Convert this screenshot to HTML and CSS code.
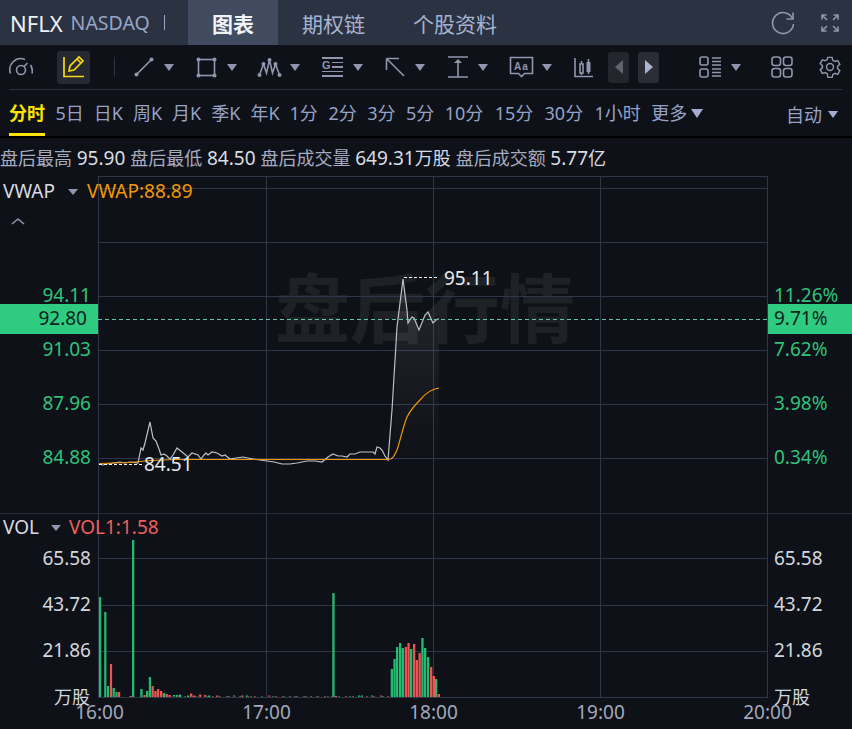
FILE: index.html
```html
<!DOCTYPE html>
<html lang="zh-CN">
<head>
<meta charset="utf-8">
<title>NFLX</title>
<link rel="stylesheet" href="styles.css">
</head>
<body>
<div class="app">
  <header class="topbar">
    <div class="symbol"><span class="ticker">NFLX</span><span class="market">NASDAQ</span><span class="sep"></span></div>
    <nav class="tabs">
      <span class="tab active">图表</span>
      <span class="tab">期权链</span>
      <span class="tab">个股资料</span>
    </nav>
    <div class="top-actions">
      <svg class="ico" width="24" height="24" viewBox="0 0 24 24"><path d="M21.500 7.500A10.500 10.500 0 1 0 22.500 13"/><path d="M22 1.500v6.500h-6.500"/></svg>
      <svg class="ico" width="18" height="18" viewBox="0 0 18 18"><path d="M1 5.500V1h4.500M12.500 1H17v4.500M1 12.500V17h4.500M17 12.500V17h-4.500M1.500 1.500L6 6M16.500 1.500L12 6M1.500 16.500L6 12M16.500 16.500L12 12"/></svg>
    </div>
  </header>

  <div class="toolbar">
    <svg class="ico gauge" width="24" height="20" viewBox="0 0 24 20"><path d="M1.500 16.500A11 11 0 0 1 16 2.500M21.500 8a11 11 0 0 1 1.500 8.500"/><circle cx="12" cy="13" r="4.500"/><path d="M15 9.500l3.500-3.500"/></svg>
    <span class="pen-btn"><svg class="pen" width="22" height="24" viewBox="0 0 22 24"><path d="M1 2v19.500h20"/><path d="M6 16l1-5 9-9 4 4-9 9z"/><path d="M14 4l4 4"/></svg></span>
    <span class="divider"></span>
    <span class="group"><svg class="ico" width="20" height="20" viewBox="0 0 20 20"><path d="M3 17L17 3"/><circle class="dot" cx="2.500" cy="17.500" r="2"/><circle class="dot" cx="17.500" cy="2.500" r="2"/></svg><i class="caret"></i></span>
    <span class="group g2"><svg class="ico" width="21" height="21" viewBox="0 0 21 21"><rect x="2.500" y="2.500" width="16" height="16"/><circle class="dot" cx="2.500" cy="2.500" r="2"/><circle class="dot" cx="18.500" cy="2.500" r="2"/><circle class="dot" cx="2.500" cy="18.500" r="2"/><circle class="dot" cx="18.500" cy="18.500" r="2"/></svg><i class="caret"></i></span>
    <span class="group g3"><svg class="ico" width="25" height="21" viewBox="0 0 25 21"><path d="M2.500 18L6.500 7 9.500 16 12.500 3 15.500 16 18.500 7 22.500 18"/><circle class="dot" cx="2.500" cy="18" r="2"/><circle class="dot" cx="6.500" cy="7" r="2"/><circle class="dot" cx="12.500" cy="3" r="2"/><circle class="dot" cx="18.500" cy="7" r="2"/><circle class="dot" cx="22.500" cy="18" r="2"/></svg><i class="caret"></i></span>
    <span class="group g4"><span class="fib"><b>G</b></span><i class="caret"></i></span>
    <span class="group g5"><svg class="ico" width="20" height="20" viewBox="0 0 20 20"><path d="M1.500 1.500H14M1.500 1.500V13M1.500 1.500L19 19"/></svg><i class="caret"></i></span>
    <span class="group g6"><svg class="ico" width="20" height="22" viewBox="0 0 20 22"><path d="M0 1h20M0 21h20M10 6v15"/><path class="dot" d="M10 3l4 4H6z"/></svg><i class="caret"></i></span>
    <span class="group g7"><svg class="ico aa" width="25" height="22" viewBox="0 0 25 22"><path d="M1.500 1.500h22v16h-8l-3 3-3-3h-8z"/><text x="12.500" y="14" text-anchor="middle">Aa</text></svg><i class="caret"></i></span>
    <svg class="ico candles" width="20" height="21" viewBox="0 0 20 21"><path d="M1 1v18.500h18"/><rect x="6" y="7" width="3" height="9"/><path d="M7.500 4v3M7.500 16v2"/><rect class="dot" x="12.500" y="5" width="4" height="10"/><path d="M14.500 2v3M14.500 15v2"/></svg>
    <span class="pager dim"><i class="tri-l"></i></span>
    <span class="pager"><i class="tri-r"></i></span>
    <span class="group g8"><svg class="ico" width="22" height="22" viewBox="0 0 22 22"><rect x="1" y="1" width="8" height="8" rx="2"/><rect x="1" y="13" width="8" height="8" rx="2"/><path d="M13 2h9M13 5.500h9M13 9h9M13 13h9M13 16.500h9M13 20h9"/></svg><i class="caret"></i></span>
    <svg class="ico grid4" width="22" height="22" viewBox="0 0 22 22"><rect x="1" y="1" width="8.500" height="8.500" rx="2.500"/><rect x="12.500" y="1" width="8.500" height="8.500" rx="2.500"/><rect x="1" y="12.500" width="8.500" height="8.500" rx="2.500"/><rect x="12.500" y="12.500" width="8.500" height="8.500" rx="2.500"/></svg>
    <svg class="ico gear" width="22" height="22" viewBox="0 0 24 24"><path d="M9.700 1.500h4.600l.7 3.200 2.300 1.300 3.100-1 2.300 4-2.400 2.200v2.600l2.400 2.200-2.300 4-3.100-1-2.300 1.300-.7 3.200H9.700L9 19.300l-2.300-1.300-3.100 1-2.300-4L3.700 13v-2.600L1.300 8.200l2.300-4 3.100 1L9 3.900z"/><circle cx="12" cy="12" r="3.800"/></svg>
  </div>

  <div class="periods">
    <span class="period current">分时</span>
    <span class="period k">5日</span>
    <span class="period k">日K</span>
    <span class="period k">周K</span>
    <span class="period k">月K</span>
    <span class="period k">季K</span>
    <span class="period k">年K</span>
    <span class="period">1分</span>
    <span class="period">2分</span>
    <span class="period">3分</span>
    <span class="period">5分</span>
    <span class="period wide">10分</span>
    <span class="period wide">15分</span>
    <span class="period wide">30分</span>
    <span class="period">1小时</span>
    <span class="period more">更多<i class="caret big"></i></span>
    <span class="period auto">自动<i class="caret small"></i></span>
  </div>

  <div class="stats">
    <span>盘后最高 <b>95.90</b></span>
    <span>盘后最低 <b>84.50</b></span>
    <span>盘后成交量 <b>649.31<em>万股</em></b></span>
    <span>盘后成交额 <b>5.77<em>亿</em></b></span>
  </div>

  <div class="chart">
    <svg class="plot" width="852" height="553" viewBox="0 176 852 553">
      <defs>
        <linearGradient id="fade" x1="0" y1="0" x2="0" y2="1">
          <stop offset="0" stop-color="#fff" stop-opacity=".09"/>
          <stop offset="1" stop-color="#fff" stop-opacity="0"/>
        </linearGradient>
      </defs>
      <text class="watermark" x="425" y="337" text-anchor="middle">盘后行情</text>
      <path class="grid" d="M98 176.500H768M98 188.500H768M98 242.500H768M98 296.500H768M98 350.500H768M98 404.500H768M98 458.500H768M98 558.500H768M98 605.500H768M98 651.500H768M98 697.500H768"/>
      <path class="grid" d="M98.500 176V513M266.500 176V513M433.500 176V513M600.500 176V513M767.500 176V513M98.500 513V697M266.500 513V697M433.500 513V697M600.500 513V697M767.500 513V697"/>
      <path class="split" d="M0 513.500H852"/>

      <path class="area" d="M392 460L397 327L403 279L407 310L408 323L412 317L414 318L419 330L425 315L428 312L433 323L437 319L439 319V460Z"/>
      <path class="price" d="M99 464L103 465L107 464L113 463L120 462L125 463L130 462L138 463L141 448L143 450L145 443L150 422L153 438L156 441L159 449L161 455L164 454L167 456L170 459L173 455L177 448L182 452L188 457L192 453L198 455L201 459L204 455L206 453L208 455L212 452L217 453L222 456L225 455L230 459L236 458L243 457L248 458L253 459L260 460L267 461L274 462L282 464L290 464L297 463L302 462L307 461L315 461L322 462L328 457L333 454L338 456L342 456L347 457L350 454L355 454L360 452L366 452L373 452L375 454L377 447L380 448L382 450L385 456L388 460L392 410L397 327L403 279L407 310L408 323L412 317L414 318L419 330L425 315L428 312L433 323L437 319L439 319"/>
      <path class="vwap" d="M99 463.500L130 462.500L150 460.500L175 459.500H388C392 459.500 394 457 397 450C400 441 403 427 407 417C410 411 416 404 420 400C425 394 431 389 439 388"/>
      <path class="mark" d="M404 277.500H438M99 464.500H143"/>
      <path class="last" d="M98 319.500H768"/>
      <text class="val" x="444" y="285">95.11</text>
      <text class="val" x="144" y="471">84.51</text>

      <path class="up" d="M99 697V597h2.200v100zM104.200 697V612h2.200v85zM107 697V686h2.200v11zM112.600 697V688h2.200v9zM115.400 697V692h2.200v5zM132 697V540h2.300v157zM140.300 697V689h2.300v8zM146 697V691h2.300v6zM148.800 697V677h2.300v20zM162.800 697V693h2.300v4zM173 697V695h2.300v2zM176 697V695h2.300v2zM179 697V694.500h2.300v2.500zM187 697V695.500h2.300v1.500zM208 697V695.500h2.300v1.500zM233 697V695.500h2.300v1.500zM246 697V695.500h2.300v1.500zM332.300 697V593h2.300v104zM358 697V695.500h2v1.500zM361 697V695.500h2v1.500zM371 697V695.500h2v1.500zM390.700 697V669h2.300v28zM393.400 697V659h2.300v38zM396 697V647h2.300v50zM399 697V643h2.300v54zM401.700 697V648h2.300v49zM410 697V649h2.300v48zM421.300 697V638h2.300v59zM424 697V648h2.300v49zM427 697V657h2.300v40zM435 697V679h2.300v18z"/>
      <path class="down" d="M109.900 697V664h2.200v33zM118 697V692h2.200v5zM129.400 697V696h2.200v1zM143.400 697V695h2.200v2zM151.500 697V686h2.300v11zM154.300 697V691h2.300v6zM157 697V689h2.300v8zM160 697V691h2.300v6zM165.500 697V694h2.300v3zM168.400 697V695h2.300v2zM190 697V693.500h2.300v3.500zM193 697V695.500h2.300v1.500zM199 697V694.500h2.300v2.500zM204 697V695h2.300v2zM216 697V695.500h2.300v1.500zM241 697V695.500h2.300v1.500zM268 697V695.500h2.300v1.500zM335 697V696h2v1zM380 697V695.500h2v1.500zM404.700 697V647h2.300v50zM407.400 697V643h2.300v54zM413 697V644h2.300v53zM415.700 697V660h2.300v37zM418.500 697V653h2.300v44zM430 697V667h2.300v30zM432.700 697V676h2.300v21zM437.700 697V694h2.300v3z"/>
      <path class="tiny-red" d="M170 696.500H390"/>
      <path class="tiny-green" d="M173 696.500H388"/>

      <g class="axis-green">
        <text x="91" y="302" text-anchor="end">94.11</text>
        <text x="91" y="356" text-anchor="end">91.03</text>
        <text x="91" y="410" text-anchor="end">87.96</text>
        <text x="91" y="464" text-anchor="end">84.88</text>
        <text x="774" y="302">11.26%</text>
        <text x="774" y="356">7.62%</text>
        <text x="774" y="410">3.98%</text>
        <text x="774" y="464">0.34%</text>
      </g>
      <rect class="tag" x="0" y="304" width="98" height="30"/>
      <rect class="tag" x="768" y="304" width="84" height="30"/>
      <text class="tag-text" x="87" y="325" text-anchor="end">92.80</text>
      <text class="tag-text" x="774" y="325">9.71%</text>

      <g class="axis-white">
        <text x="91" y="565" text-anchor="end">65.58</text>
        <text x="91" y="611" text-anchor="end">43.72</text>
        <text x="91" y="657" text-anchor="end">21.86</text>
        <text class="unit" x="90" y="704" text-anchor="end">万股</text>
        <text x="774" y="565">65.58</text>
        <text x="774" y="611">43.72</text>
        <text x="774" y="657">21.86</text>
        <text class="unit" x="774" y="704">万股</text>
      </g>
      <g class="axis-time" text-anchor="middle">
        <text x="99.500" y="719">16:00</text>
        <text x="266.500" y="719">17:00</text>
        <text x="433.500" y="719">18:00</text>
        <text x="600.500" y="719">19:00</text>
        <text x="767.500" y="719">20:00</text>
      </g>

      <text class="ind" x="3" y="198">VWAP</text>
      <path class="ind-caret" d="M68 189h10l-5 6z"/>
      <text class="ind-vwap" x="87" y="198">VWAP:88.89</text>
      <path class="chev" d="M12 224l6-5 6 5"/>
      <text class="ind" x="3" y="534">VOL</text>
      <path class="ind-caret" d="M51 525h10l-5 6z"/>
      <text class="ind-vol" x="69" y="534">VOL1:1.58</text>
    </svg>
  </div>
</div>
</body>
</html>
```

FILE: styles.css
```css
* { box-sizing: border-box; }
html, body { margin: 0; padding: 0; background: #0e1117; }
body { font-family: "Noto Sans", "Noto Sans CJK SC", sans-serif; overflow: hidden; }
.app { width: 852px; height: 729px; overflow: hidden; display: flex; flex-direction: column; background: #0e1117; }

.topbar { height: 45px; background: #2b3241; display: flex; align-items: stretch; flex: none; }
.symbol { width: 188px; display: flex; align-items: center; padding-left: 10px; }
.ticker { font-size: 22px; color: #f0f2f6; line-height: 1; }
.market { font-size: 19.500px; color: #98a6c6; margin-left: 8px; line-height: 1; }
.sep { width: 1px; height: 15px; background: #98a6c6; margin-left: 14px; }
.tabs { display: flex; }
.tab { display: flex; align-items: center; justify-content: center; font-size: 21px; color: #a6b3d0; width: 111px; }
.tab:nth-child(3) { width: 132px; }
.tab.active { width: 90px; background: #404b5f; color: #f1f3f7; font-weight: 700; }
.top-actions { margin-left: auto; display: flex; align-items: center; gap: 26px; padding-right: 13px; }

.ico { fill: none; stroke: #8f96ae; stroke-width: 1.600; flex: none; display: block; }
.ico .dot { fill: #8f96ae; stroke: none; }
.ico text { fill: #8f96ae; stroke: none; font: 700 10px "Liberation Sans", sans-serif; letter-spacing: 1px; }

.toolbar { height: 45px; flex: none; margin: 0 10px 0 9px; border-bottom: 1px solid #2c303e; display: flex; align-items: center; }
.gauge { margin-right: 24px; }
.pen-btn { width: 33px; height: 33px; background: #262931; border-radius: 3px; display: flex; align-items: center; justify-content: center; }
.pen { fill: none; stroke: #f7d813; stroke-width: 1.700; }
.divider { width: 1px; height: 20px; background: #2e3240; margin: 0 19px 0 24px; }
.group { display: flex; align-items: center; gap: 10px; flex: none; }
.g2 { margin-left: 22px; }
.g3 { margin-left: 20px; gap: 8px; }
.g4 { margin-left: 22px; }
.g5 { margin-left: 22px; }
.g6 { margin-left: 23px; }
.g7 { margin-left: 21px; gap: 8px; }
.g8 { margin-left: 40px; }
.caret { display: block; width: 0; height: 0; border-left: 5px solid transparent; border-right: 5px solid transparent; border-top: 7px solid #8f96ae; }
.caret.big { border-left-width: 6.500px; border-right-width: 6.500px; border-top: 9px solid #a4add0; margin-left: 4px; }
.caret.small { border-top-color: #a4add0; margin-left: 6px; }
.fib { width: 21px; height: 21px; display: block; position: relative; background: repeating-linear-gradient(#8f96ae 0 1.500px, transparent 1.500px 4.600px); }
.fib b { position: absolute; left: 0; top: 3px; font: 700 11px/11px "Liberation Sans", sans-serif; color: #8f96ae; background: #0e1117; padding-right: 1px; }
.candles { margin-left: 22px; }
.pager { width: 21px; height: 31px; background: #2a2d36; border-radius: 3px; margin-left: 14px; display: flex; align-items: center; justify-content: center; }
.pager + .pager { margin-left: 9px; }
.pager.dim { background: #23262d; }
.tri-l { display: block; border-top: 7px solid transparent; border-bottom: 7px solid transparent; border-right: 8px solid #60646f; }
.tri-r { display: block; border-top: 7px solid transparent; border-bottom: 7px solid transparent; border-left: 8px solid #aab3d0; }
.grid4 { margin-left: 30px; }
.gear { margin-left: 26px; }

.periods { height: 48px; flex: none; padding: 0 14px 0 9px; display: flex; align-items: center; gap: 10.500px; border-bottom: 2px solid #000; position: relative; }
.period { font-size: 18px; color: #97a3c6; line-height: 1; display: flex; align-items: center; white-space: nowrap; }
.period.k { margin-right: -.5px; }
.period.wide { margin-right: .8px; }
.period.current { color: #ffe400; font-weight: 700; }
.period.current::after { content: ""; position: absolute; left: 9px; width: 36px; bottom: 0; height: 3px; background: #ffe400; }
.period.auto { margin-left: auto; padding-top: 3px; }

.stats { height: 38px; flex: none; display: flex; align-items: center; gap: 5px; font-size: 18px; color: #a6abc0; white-space: nowrap; }
.stats b { font-weight: 400; font-size: 19px; color: #d9dce4; }
.stats em { font-style: normal; font-size: 18px; }

.chart { height: 553px; flex: none; }
.plot { display: block; font-family: "Noto Sans", "Noto Sans CJK SC", sans-serif; font-size: 19px; }
.watermark { font-size: 75px; font-weight: 700; fill: #1e2126; }
.grid { stroke: #2e3747; stroke-width: 1; fill: none; }
.split { stroke: #2a2e38; stroke-width: 1; }
.area { fill: url(#fade); }
.vwap { fill: none; stroke: #f19806; stroke-width: 1.200; }
.price { fill: none; stroke: #bfc2c8; stroke-width: 1.200; }
.mark { fill: none; stroke: #f2f3f5; stroke-width: 1; stroke-dasharray: 3 2; }
.last { fill: none; stroke: #5fc9a0; stroke-width: 1; stroke-dasharray: 4 3; }
.val { fill: #e8eaee; }
.up { fill: #22bb72; }
.down { fill: #ee5350; }
.tiny-red { fill: none; stroke: #8a3c3f; stroke-width: 1; stroke-dasharray: 2 5; }
.tiny-green { fill: none; stroke: #1c6a48; stroke-width: 1; stroke-dasharray: 2 9; }
.axis-green text { fill: #2fc27c; }
.axis-white text { fill: #d4d7df; }
.axis-white .unit { font-size: 18px; }
.axis-time text { fill: #a3a8bb; }
.tag { fill: #2ecb80; }
.tag-text { fill: #10241c; }
.ind { fill: #d8dbe3; }
.ind-caret { fill: #8f96ae; }
.ind-vwap { fill: #f19806; }
.ind-vol { fill: #ee5f5c; }
.chev { fill: none; stroke: #8f96ae; stroke-width: 1.600; }
```
